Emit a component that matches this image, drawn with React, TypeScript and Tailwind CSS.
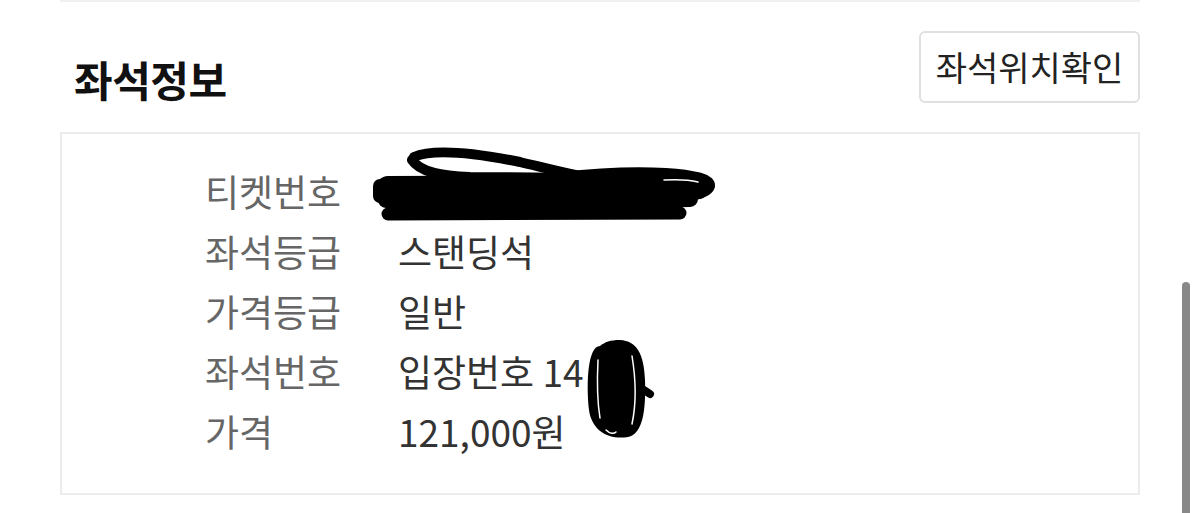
import React from "react";

const font = { fontFamily: '"Noto Sans CJK KR", "Noto Sans", sans-serif' };

const rows: [string, string][] = [
  ["티켓번호", ""],
  ["좌석등급", "스탠딩석"],
  ["가격등급", "일반"],
  ["좌석번호", "입장번호 14"],
  ["가격", "121,000원"],
];

function Scribbles() {
  return (
    <svg
      className="absolute left-0 top-0 pointer-events-none"
      width={1200}
      height={513}
      viewBox="0 0 1200 513"
    >
      <g fill="none" stroke="#000" strokeLinecap="round" strokeLinejoin="round">
        {/* ticket number scribble */}
        <path d="M414 157 C432 149 470 152 520 162 C545 168 560 172 580 176" strokeWidth={10} />
        <path d="M412 160 C420 172 440 176 470 177 L580 178" strokeWidth={10} />
        <path d="M388 188 L698 187" strokeWidth={24} />
        <path d="M386 200 C500 203 600 201 690 199" strokeWidth={16} />
        <path d="M388 214 L680 213" strokeWidth={13} />
        <path d="M560 177 C640 168 712 172 710 186 C708 196 680 199 650 199" strokeWidth={10} />
        <path d="M380 186 L380 196" strokeWidth={14} />
        <path d="M664 180 C680 179 690 180 698 182" stroke="#fff" strokeWidth={1.5} />
      </g>
      {/* seat number scribble */}
      <path
        d="M600 346 C588 346 586 382 589 410 C592 432 610 440 628 437 C643 434 646 410 645 380 C644 354 637 341 620 340 C610 340 605 342 600 346 Z"
        fill="#000"
      />
      <g fill="none" strokeLinecap="round">
        <path d="M641 388 L650 394" stroke="#000" strokeWidth={8} />
        <path d="M598 360 C597 380 597 400 600 418" stroke="#fff" strokeWidth={1.5} />
        <path d="M632 356 C636 380 636 405 632 424" stroke="#fff" strokeWidth={1.5} />
        <path d="M606 430 C610 434 614 434 616 432" stroke="#fff" strokeWidth={1.5} />
      </g>
    </svg>
  );
}

export default function App() {
  return (
    <div className="relative w-[1200px] h-[513px] bg-white overflow-hidden" style={font}>
      <div className="mx-[60px] h-[2px] bg-[#f0f0f0]" />
      <div className="mx-[60px] mt-[29px] flex items-end justify-between">
        <h2 className="ml-[14px] mb-[3px] text-[42px] font-bold leading-none text-[#111] tracking-[-0.5px]">
          좌석정보
        </h2>
        <button className="w-[221px] h-[72px] border-2 border-[#e0e0e0] rounded-[6px] bg-white text-[34px] text-[#222] leading-none">
          좌석위치확인
        </button>
      </div>
      <div className="mx-[60px] mt-[29px] h-[363px] border-2 border-[#ececec] pt-[27px]">
        {rows.map(([k, v]) => (
          <div key={k} className="flex h-[60px] items-center text-[37px] leading-none">
            <div className="ml-[143px] w-[193px] text-[#666]">{k}</div>
            <div className="text-[#333]">{v}</div>
          </div>
        ))}
      </div>
      <div className="absolute left-[1182px] top-[282px] w-[8px] h-[240px] rounded-full bg-[#888]" />
      <Scribbles />
    </div>
  );
}
